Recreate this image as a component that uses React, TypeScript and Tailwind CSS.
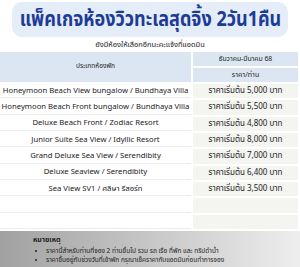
import React from "react";

const rows: [string, string][] = [
  ["Honeymoon Beach View bungalow / Bundhaya Villa", "ราคาเริ่มต้น 5,000 บาท"],
  ["Honeymoon Beach Front bungalow / Bundhaya Villa", "ราคาเริ่มต้น 5,500 บาท"],
  ["Deluxe Beach Front / Zodiac Resort", "ราคาเริ่มต้น 4,800 บาท"],
  ["Junior Suite Sea View / Idyllic Resort", "ราคาเริ่มต้น 8,000 บาท"],
  ["Grand Deluxe Sea View / Serendibity", "ราคาเริ่มต้น 7,000 บาท"],
  ["Deluxe Seaview / Serendibity", "ราคาเริ่มต้น 6,400 บาท"],
  ["Sea View SV1 / ศลิษา รีสอร์ท", "ราคาเริ่มต้น 3,500 บาท"],
  ["", ""],
  ["", ""],
];

export default function App() {
  return (
    <div
      className="w-[300px] h-[267px] bg-white overflow-hidden flex flex-col text-[#222]"
      style={{ fontFamily: '"Noto Sans Thai", "Noto Sans", "Open Sans", sans-serif' }}
    >
      <div className="px-[12px] pt-[2px]">
        <div className="h-[35px] rounded-[10px] bg-[#e5edf9] flex items-center justify-center overflow-hidden">
          <span className="inline-block shrink-0 whitespace-nowrap scale-x-82 text-[22px] font-bold text-[#1d3c95] leading-none">
            แพ็คเกจห้องวิวทะเลสุดจิ้ง 2วัน1คืน
          </span>
        </div>
      </div>
      <div className="h-[15px] flex items-center justify-center text-[7.5px] leading-none whitespace-nowrap">
        ยังมีห้องให้เลือกอีกนะคะแจ้งที่แอดมิน
      </div>
      <div className="grid grid-cols-[191px_1fr] gap-x-[2px] gap-y-[2px] pr-[2px]">
        <div className="row-span-2 bg-[#dce6f2] flex items-center justify-center text-[6.6px]">
          ประเภทห้องพัก
        </div>
        <div className="h-[14px] bg-[#dce6f2] flex items-center justify-center text-[6.8px] whitespace-nowrap">
          ธันวาคม-มีนาคม 68
        </div>
        <div className="h-[14px] bg-[#dce6f2] flex items-center justify-center text-[7px]">
          ราคา/ท่าน
        </div>
        {rows.map(([name, price], i) => (
          <React.Fragment key={i}>
            <div className="h-[14.33px] bg-white border-b border-[#ececec] flex items-center justify-center text-[7.7px] whitespace-nowrap leading-none">
              {name}
            </div>
            <div className="h-[14.33px] bg-[#f4f4f1] flex items-center justify-center text-[8px] whitespace-nowrap leading-none">
              {price}
            </div>
          </React.Fragment>
        ))}
      </div>
      <div className="mt-[2px] flex-1 bg-gradient-to-r from-[#a1a1a1] to-[#eeeeee] pl-[33px] pt-[6px] text-[6.5px] leading-none">
        <div className="font-bold text-[7px] h-[8px] flex items-center">หมายเหตุ</div>
        <ul className="list-disc pl-[13px] mt-[2px] flex flex-col">
          <li className="h-[9px] leading-[9px] whitespace-nowrap">ราคานี้สำหรับท่านที่จอง 2 ท่านขึ้นไป รวม รถ เรือ ที่พัก และ ทริปดำน้ำ</li>
          <li className="h-[9px] leading-[9px] whitespace-nowrap">ราคาขึ้นอยู่กับช่วงวันที่เข้าพัก กรุณาเช็คราคากับแอดมินก่อนทำการจอง</li>
        </ul>
      </div>
    </div>
  );
}
